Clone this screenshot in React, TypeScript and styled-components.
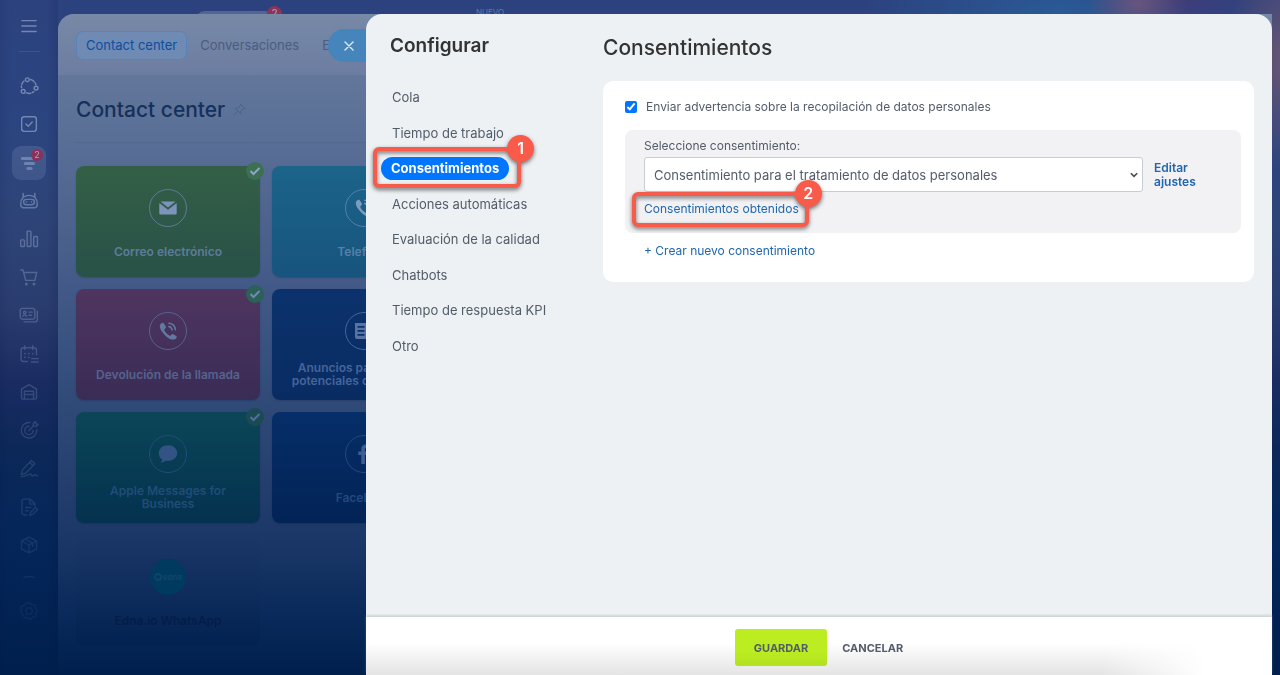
import React from "react";
import styled, { createGlobalStyle, css } from "styled-components";

const GlobalStyle = createGlobalStyle`
  *, *::before, *::after { box-sizing: border-box; }
  body {
    margin: 0;
    background: #001f4d;
    font-family: Inter, "Liberation Sans", sans-serif;
    font-size: 13px;
    color: #525c69;
  }
  a { text-decoration: none; color: inherit; }
  button { font: inherit; border: 0; padding: 0; background: none; cursor: pointer; }
  ul { list-style: none; margin: 0; padding: 0; }
  h1, h2, p { margin: 0; }
`;

/* ---------- workspace ---------- */

const Workspace = styled.div`
  display: flex;
  min-height: 100vh;
  background:
    linear-gradient(90deg, rgba(6, 18, 70, 0.1), transparent 10px, transparent 46px, rgba(6, 18, 60, 0.14) 58px, transparent 58px),
    radial-gradient(ellipse 50px 40px at 1138px 4px, rgba(120, 90, 125, 0.75), transparent),
    radial-gradient(ellipse 60px 110px at 1285px 60px, rgba(112, 88, 112, 0.9), transparent),
    radial-gradient(ellipse 90px 40px at 1180px 0, rgba(64, 58, 118, 0.9), transparent),
    radial-gradient(ellipse 200px 60px at 1060px 10px, rgba(42, 96, 155, 0.8), transparent),
    linear-gradient(180deg, #2c427f 0, #2b4580 120px, #2e4478 220px, #2a3c6e 310px, #1a2c62 380px, #0c2859 450px, #04265a 540px, #001f4d 675px);
`;

const Rail = styled.nav`
  flex: 0 0 58px;
  display: flex;
  flex-direction: column;
  align-items: center;
  padding-top: 14px;
`;

const RailFade = styled.div`
  display: flex;
  flex-direction: column;
  align-items: center;
  color: #8c9dc2;
  -webkit-mask-image: linear-gradient(180deg, rgba(0, 0, 0, 0.75) 0, rgba(0, 0, 0, 0.75) 130px, rgba(0, 0, 0, 0.42) 260px, rgba(0, 0, 0, 0.26) 400px, rgba(0, 0, 0, 0.08) 600px);
  mask-image: linear-gradient(180deg, rgba(0, 0, 0, 0.75) 0, rgba(0, 0, 0, 0.75) 130px, rgba(0, 0, 0, 0.42) 260px, rgba(0, 0, 0, 0.26) 400px, rgba(0, 0, 0, 0.08) 600px);
`;

const RailList = styled.ul`
  display: grid;
  grid-auto-rows: 1fr;
  align-items: center;
  height: 497px;
  margin: 15px 0 0;
`;

const RailButton = styled.button<{ $active?: boolean; $short?: boolean }>`
  position: relative;
  display: flex;
  align-items: center;
  justify-content: center;
  width: 34px;
  height: ${(p) => (p.$short ? 24 : 34)}px;
  border-radius: 9px;
  color: inherit;
  background: ${(p) => (p.$active ? "rgba(140, 160, 200, 0.3)" : "transparent")};
`;

const RailFoot = styled.div`
  display: flex;
  flex-direction: column;
  gap: 6px;
`;

const RailDivider = styled.hr`
  width: 22px;
  height: 1px;
  margin: 13px 0 0;
  border: 0;
  background: rgba(150, 165, 205, 0.2);
`;

const RailBadge = styled.span`
  position: absolute;
  top: 3px;
  right: 3px;
  width: 12px;
  height: 12px;
  border-radius: 50%;
  background: #b02a4c;
  color: #d8ccde;
  font-size: 9px;
  line-height: 12px;
  text-align: center;
`;

const Main = styled.div`
  flex: 1;
  display: flex;
  flex-direction: column;
  min-width: 0;
  padding-right: 8px;
`;

const TopStrip = styled.div`
  display: flex;
  align-items: flex-start;
  height: 14px;
  padding-left: 137px;
  overflow: hidden;
`;

const TopTab = styled.div`
  position: relative;
  width: 80px;
  height: 20px;
  margin-top: 11px;
  border-radius: 10px;
  background: #526594;
`;

const TopBadge = styled.span`
  position: absolute;
  top: -5px;
  right: -7px;
  width: 15px;
  height: 15px;
  border-radius: 50%;
  background: #8a3459;
  color: #b5a3bd;
  font-size: 10px;
  line-height: 14px;
  text-align: center;
`;

const TopNew = styled.span`
  margin: 7px 0 0 201px;
  color: #6478a8;
  font-size: 8px;
  line-height: 10px;
`;

const Page = styled.main`
  flex: 1;
  border-radius: 16px 0 0 0;
  overflow: hidden;
  background: linear-gradient(180deg, #62779a 61px, #576c94 146px, #435a88 270px, #304a78 390px, #1c3868 520px, #092a5b 600px, #001f4d 661px);
`;

const PageHeader = styled.header`
  display: flex;
  align-items: center;
  height: 61px;
  padding: 1px 0 0 18px;
  background: linear-gradient(180deg, #7789a6, #6c7da2);
`;

const HeaderLink = styled.a<{ $active?: boolean }>`
  padding: 0 9px;
  margin-right: 3px;
  border: 1px solid transparent;
  border-radius: 7px;
  font-size: 13px;
  line-height: 27px;
  white-space: nowrap;
  color: #4a5d82;
  ${(p) =>
    p.$active &&
    css`
      color: #0d4da3;
      border-color: #5684bb;
      background: #6f8ab3;
    `}
`;

const PageTitleRow = styled.div`
  display: flex;
  align-items: center;
  gap: 8px;
  height: 68px;
  margin: 0 18px;
  padding-top: 2px;
  border-bottom: 1px solid rgba(70, 90, 130, 0.3);
  color: #4c628b;
`;

const PageTitle = styled.h1`
  color: #15305a;
  font-size: 21px;
  font-weight: 500;
  line-height: 28px;
`;

const TileGrid = styled.div`
  display: grid;
  grid-template-columns: repeat(2, 184px);
  grid-auto-rows: 111px;
  gap: 12px;
  padding: 23px 18px 28px;
`;

const Tile = styled.a<{ $from: string; $to: string; $ink: string; $flat?: boolean }>`
  position: relative;
  display: flex;
  flex-direction: column;
  align-items: center;
  padding: 23px 12px 0;
  border-radius: 8px;
  background: linear-gradient(180deg, ${(p) => p.$from}, ${(p) => p.$to});
  box-shadow: ${(p) => (p.$flat ? "none" : "0 1px 2px rgba(0, 20, 60, 0.2)")};
  color: ${(p) => p.$ink};
`;

const TileDisc = styled.span<{ $fill?: string }>`
  flex: none;
  display: flex;
  align-items: center;
  justify-content: center;
  width: 38px;
  height: 38px;
  border: 1px solid ${(p) => (p.$fill ? "transparent" : "currentColor")};
  border-radius: 50%;
  background: ${(p) => p.$fill || "none"};
  background-clip: padding-box;
`;

const EdnaMark = styled.span`
  display: flex;
  align-items: center;
  gap: 1px;
  color: #0f4569;
  font-size: 8px;
  font-weight: 700;
  line-height: 10px;
`;

const TileLabel = styled.span`
  display: flex;
  align-items: center;
  height: 48px;
  font-size: 12px;
  font-weight: 600;
  line-height: 13px;
  text-align: center;
  white-space: pre-line;
`;

const TileCheck = styled.span<{ $fill: string }>`
  position: absolute;
  top: -4px;
  right: -4px;
  display: flex;
  align-items: center;
  justify-content: center;
  width: 18px;
  height: 18px;
  border-radius: 50%;
  background: ${(p) => p.$fill};
`;

/* ---------- drawer ---------- */

const Drawer = styled.section`
  position: fixed;
  inset: 14px 8px 0 366px;
  display: flex;
  flex-direction: column;
  border-radius: 16px 16px 0 0;
  background: #edf1f4;
`;

const CloseButton = styled.button`
  position: absolute;
  top: 15px;
  left: -38px;
  z-index: -1;
  display: flex;
  align-items: center;
  width: 38px;
  height: 33px;
  padding-left: 15px;
  border-radius: 16px 0 0 16px;
  background: #4585bc;
  color: #dfeaf5;
`;

const DrawerBody = styled.div`
  flex: 1;
  display: flex;
  min-height: 0;
`;

const SideMenu = styled.nav`
  flex: 0 0 237px;
  padding: 18px 0 0 15px;
`;

const SideTitle = styled.h2`
  padding-left: 9px;
  color: #333;
  font-size: 19px;
  font-weight: 600;
  line-height: 28px;
`;

const SideList = styled.ul`
  display: grid;
  grid-auto-rows: 1fr;
  align-items: center;
  justify-items: start;
  height: 284px;
  margin-top: 20px;
`;

const SideItem = styled.li`
  position: relative;
`;

const SideLink = styled.a<{ $active?: boolean }>`
  display: block;
  padding: 0 11px;
  border-radius: 12px;
  font-size: 13px;
  line-height: 23px;
  color: #525c69;
  ${(p) =>
    p.$active &&
    css`
      padding: 0 10px;
      background: #0075ff;
      color: #fff;
      font-weight: 700;
    `}
`;

const Callout = styled.span<{ $inset: string }>`
  position: absolute;
  inset: ${(p) => p.$inset};
  border: 4px solid #f95b4b;
  border-radius: 6px;
  filter: drop-shadow(0 2px 2px rgba(0, 0, 0, 0.55));
  pointer-events: none;
`;

const CalloutNumber = styled.span`
  position: absolute;
  top: -16px;
  right: -17px;
  width: 27px;
  height: 27px;
  border-radius: 50%;
  background: #f95b4b;
  color: #fff;
  font-size: 16px;
  font-weight: 600;
  line-height: 27px;
  text-align: center;
`;

const Content = styled.div`
  flex: 1;
  min-width: 0;
  padding: 20px 18px 0 0;
`;

const ContentTitle = styled.h1`
  color: #333;
  font-size: 21px;
  font-weight: 500;
  line-height: 28px;
`;

const Card = styled.div`
  margin-top: 19px;
  padding: 17px 13px 23px 22px;
  border-radius: 10px;
  background: #fff;
`;

const CheckRow = styled.label`
  display: flex;
  align-items: center;
  gap: 9px;
  font-size: 12px;
  line-height: 18px;
`;

const Checkbox = styled.input`
  width: 12px;
  height: 12px;
  margin: 0;
  accent-color: #0075ff;
`;

const ConsentBox = styled.div`
  margin-top: 14px;
  padding: 8px 18px 16px 19px;
  border-radius: 8px;
  background: #f2f2f4;
`;

const FieldLabel = styled.label`
  display: block;
  font-size: 12px;
  line-height: 16px;
`;

const FieldRow = styled.div`
  display: grid;
  grid-template-columns: minmax(0, 1fr) 69px;
  align-items: center;
  gap: 11px;
  margin-top: 3px;
`;

const SelectWrap = styled.div`
  position: relative;
`;

const Select = styled.select`
  display: block;
  width: 100%;
  height: 35px;
  padding: 0 28px 0 9px;
  appearance: none;
  border: 1px solid #c6cdd3;
  border-radius: 3px;
  background: #fff;
  color: #525c69;
  font: 13px Inter, "Liberation Sans", sans-serif;
`;

const SelectArrow = styled.svg`
  position: absolute;
  top: 13px;
  right: 4px;
  pointer-events: none;
`;

const EditLink = styled.a`
  color: #2067b0;
  font-size: 12px;
  font-weight: 600;
  line-height: 14px;
`;

const TextLink = styled.a`
  position: relative;
  color: #2067b0;
  font-size: 12px;
  line-height: 17px;
`;

const LinkRow = styled.div`
  display: flex;
  margin-top: 8px;
`;

const CreateRow = styled.div`
  display: flex;
  margin: 9px 0 0 19px;
`;

const Footer = styled.footer`
  position: relative;
  display: flex;
  align-items: center;
  justify-content: center;
  gap: 15px;
  height: 58px;
  padding-top: 3px;
  background: linear-gradient(180deg, #fff 45%, #e4e4e4);
  box-shadow: 0 -2px 2px rgba(160, 170, 170, 0.4);

  &::after {
    content: "";
    position: absolute;
    inset: 0 0 0 auto;
    width: 170px;
    background: linear-gradient(90deg, transparent, #fff 60%);
  }
`;

const FooterButton = styled.button<{ $primary?: boolean }>`
  height: 37px;
  padding: 0 ${(p) => (p.$primary ? 19 : 0)}px;
  border-radius: 3px;
  background: ${(p) => (p.$primary ? "linear-gradient(180deg, #bbed21 60%, #b1e11f)" : "none")};
  color: #525c69;
  font-size: 11px;
  font-weight: 700;
`;

/* ---------- icons ---------- */

const LineSvg = styled.svg`
  display: block;
  fill: none;
  stroke: currentColor;
  stroke-width: 1.7;
  stroke-linecap: round;
  stroke-linejoin: round;
`;

const Line = ({ children, size = 20 }: { children: React.ReactNode; size?: number }) => (
  <LineSvg width={size} height={size} viewBox="0 0 24 24" aria-hidden="true">
    {children}
  </LineSvg>
);

const railIcons: { name: string; active?: boolean; icon: React.ReactNode }[] = [
  {
    name: "Colaboración",
    icon: (
      <>
        <circle cx="10" cy="4.500" r="2.300" />
        <circle cx="5" cy="18.500" r="2.300" />
        <circle cx="20.500" cy="14.500" r="2.300" />
        <path d="M6 6C3.500 8 2.600 11 3 14M9 20.300c3.300 1.200 6.500.6 8.800-1.600M14 4.200c3 .9 5.400 3 6.300 6.300" strokeDasharray="5 2" />
      </>
    ),
  },
  {
    name: "Tareas",
    icon: (
      <>
        <rect x="3.2" y="3.2" width="17.6" height="17.6" rx="3" />
        <path d="m8.3 12 2.8 2.7 4.8-5" />
      </>
    ),
  },
  {
    name: "CRM",
    active: true,
    icon: <path strokeWidth="3.600" d="M4 6.500h16M7.500 12.500h10M10.500 18.500h4" />,
  },
  {
    name: "Marketing",
    icon: (
      <>
        <path d="M5 3v4M19 3v4M5 7.500c4-3 10-3 14 0 1.800 2 3 5 3 8.500 0 2-1 4-3 4H5c-2 0-3-2-3-4C2 12.500 3.200 9.500 5 7.500Z" />
        <rect x="5.500" y="10" width="13" height="6.500" rx="3.200" />
        <path d="M9 13.200h.1M15 13.200h.1" />
      </>
    ),
  },
  {
    name: "Analítica",
    icon: (
      <>
        <rect x="2" y="13" width="4.500" height="8" rx="1" />
        <rect x="9.800" y="2.500" width="4.500" height="18.500" rx="1" />
        <rect x="17.600" y="9" width="4.500" height="12" rx="1" />
      </>
    ),
  },
  {
    name: "Tienda",
    icon: (
      <>
        <path d="M2 3.500h2.800L8 16h11l2.300-9.500H5.600" />
        <circle cx="8.800" cy="20.300" r="1" />
        <circle cx="18" cy="20.300" r="1" />
      </>
    ),
  },
  {
    name: "Contactos",
    icon: (
      <>
        <rect x="1.500" y="4" width="17.500" height="13" rx="2.500" />
        <path d="M22 7.500V17c0 2-1 3.200-3 3.200H6" />
        <circle cx="6.800" cy="9" r="1.500" />
        <path d="M4.500 13.500c.8-2 3.800-2 4.600 0M12 8.500h4M12 12.300h3" />
      </>
    ),
  },
  {
    name: "Reservas",
    icon: (
      <>
        <path d="M10 21H5.500C3.500 21 2.500 20 2.500 18V7.500C2.500 5.500 3.500 4.500 5.500 4.500h12.500c2 0 3 1 3 3V13M7 2v4.500M16.500 2v4.500M15 17.500h8M15 21.500h8" />
        <path d="M7 11.500h.1M11.800 11.500h.1M16.500 11.500h.1M7 16h.1M11.800 16h.1" strokeWidth="2.200" />
      </>
    ),
  },
  {
    name: "Almacén",
    icon: (
      <>
        <path d="M3 18.500V8.500L12 3.200l9 5.300v10c0 1.300-.7 2-2 2H5c-1.300 0-2-.7-2-2Z" />
        <path d="M6.500 20V11h11v9M6.500 15h11" />
      </>
    ),
  },
  {
    name: "Objetivos",
    icon: (
      <>
        <path d="M13 3a9.300 9.300 0 1 0 8.300 9M12 7.500a5 5 0 1 0 5 5M12 12.500l5.500-5.500" />
        <path d="m17 7 .2-3 2.600-2 .7 2.500 2.300.8-2.300 2.400Z" />
      </>
    ),
  },
  {
    name: "Firma",
    icon: (
      <>
        <path d="m4 14.500 11-11.500 4 3.800L8 18.300 2.800 20ZM13 5.500l3.800 3.700" />
        <path d="M3 22.500c6 0 9-3.500 11-3.500 1.500 0 .2 2.500 2 2.500 1.500 0 1.500-1.500 3-1.500 1 0 1 1.300 3 1.300" />
      </>
    ),
  },
  {
    name: "Documentos",
    icon: (
      <>
        <path d="M9 21.500H6c-1.500 0-2.500-1-2.500-2.500V5c0-1.500 1-2.500 2.500-2.500h7.500L19 8v3M13 3v5.500h5.500M8 12.500h6M8 16.500h3" />
        <path d="m13 22 .8-3.500 6-6 2.500 2.500-6 6Z" />
      </>
    ),
  },
  {
    name: "Inventario",
    icon: (
      <path d="m12 2.500 9 4.700v9.600l-9 4.700-9-4.700V7.200ZM3.300 7.300 12 12l8.700-4.700M12 12v9M7.500 5l8.800 4.700v4" />
    ),
  },
];

const Handset = ({ color }: { color: string }) => (
  <svg width="20" height="20" viewBox="0 0 20 20" aria-hidden="true">
    <path
      fill={color}
      d="M2.200 3.600C3.400 2 4.800 1.300 5.700 2.300l2 3c.6 1 .1 1.800-1 2.700-.6.500-.5 1.200.2 2.300 1.300 2 2.800 3.400 4.500 4.200.9.400 1.400.1 1.900-.6.700-.9 1.500-1 2.300-.5l2.600 1.700c1 .8.500 2.300-1.200 3.100-2.700 1.300-6.700-.5-10.300-4.300C2.700 9.900 1 6 2.200 3.600Z"
    />
    <path fill="none" stroke={color} strokeWidth="1.500" strokeLinecap="round" d="M10.800 5.500c1.900.3 3 1.500 3.300 3.400M11 2.300c3.600.3 6 2.800 6.300 6.400" />
  </svg>
);

const tiles: {
  label: string;
  from: string;
  to: string;
  ink: string;
  check?: string;
  mark?: string;
  fill?: string;
  icon: React.ReactNode;
}[] = [
  {
    label: "Correo electrónico",
    from: "#345f46",
    to: "#285148",
    ink: "#5c7c98",
    mark: "#8fa3c4",
    check: "#3c6f54",
    icon: (
      <svg width="18" height="14" viewBox="0 0 18 14" aria-hidden="true">
        <path fill="#7e93b9" d="M1.500.5h15L9 6.500ZM.3 2v10.500c0 .6.400 1 1 1h15.400c.6 0 1-.4 1-1V2L9 8.800Z" />
      </svg>
    ),
  },
  {
    label: "Telefonía",
    from: "#1c6489",
    to: "#17547e",
    ink: "#5580a8",
    icon: <Handset color="#7e9abd" />,
  },
  {
    label: "Devolución de la llamada",
    from: "#4f3560",
    to: "#392c55",
    ink: "#56638f",
    mark: "#7289b0",
    check: "#2c6158",
    icon: <Handset color="#61799f" />,
  },
  {
    label: "Anuncios para clientes\npotenciales de Facebook",
    from: "#0c326d",
    to: "#082c62",
    ink: "#46649a",
    icon: (
      <svg width="20" height="18" viewBox="0 0 20 18" aria-hidden="true">
        <path fill="#5a73a2" fillRule="evenodd" d="M1 1h12v3h6v10.500c0 1.500-1 2.500-2.500 2.500H3c-1.300 0-2-.7-2-2Zm2.500 3v1.700h7V4Zm0 4v1.700h7V8Zm0 4v1.700h7V12Z" />
      </svg>
    ),
  },
  {
    label: "Apple Messages for\nBusiness",
    from: "#0b4657",
    to: "#04314f",
    ink: "#1f4d77",
    mark: "#506f9c",
    check: "#1c4a54",
    icon: (
      <svg width="20" height="20" viewBox="0 0 20 20" aria-hidden="true">
        <path fill="#345385" d="M10 1.200c5.200 0 9.200 3.400 9.200 7.800s-4 7.800-9.200 7.800c-.8 0-1.600 0-2.300-.2-1.500 1.300-3.300 2.200-5.300 2.400 1-1 1.700-2.200 1.800-3.600C2 14 .8 11.700.8 9c0-4.400 4-7.800 9.200-7.800Z" />
      </svg>
    ),
  },
  {
    label: "Facebook",
    from: "#062e68",
    to: "#022356",
    ink: "#24487f",
    icon: (
      <svg width="12" height="20" viewBox="0 0 12 20" aria-hidden="true">
        <path fill="#3c5c92" d="M3.300 20v-9H.3V7.500h3V5C3.300 2 5 .4 7.800.4c1.300 0 2.400.1 2.900.2v3.200H8.800c-1.500 0-1.900.8-1.900 1.900v1.800h3.600l-.5 3.500H6.900v9Z" />
      </svg>
    ),
  },
  {
    label: "Edna.io WhatsApp",
    from: "#1b3767",
    to: "#022252",
    ink: "#041d47",
    fill: "#003a5f",
    icon: (
      <EdnaMark>
        <svg width="8" height="8" viewBox="0 0 8 8" aria-hidden="true">
          <circle cx="4" cy="4" r="3" fill="none" stroke="currentColor" strokeWidth="1.800" />
        </svg>
        edna
      </EdnaMark>
    ),
  },
];

const menu = [
  "Cola",
  "Tiempo de trabajo",
  "Consentimientos",
  "Acciones automáticas",
  "Evaluación de la calidad",
  "Chatbots",
  "Tiempo de respuesta KPI",
  "Otro",
];

export default function App() {
  return (
    <>
      <GlobalStyle />
      <Workspace>
        <Rail aria-label="Principal">
          <RailFade>
            <RailButton $short aria-label="Menú">
              <Line>
                <path d="M3.500 5.500h17M3.500 12h17M3.500 18.500h17" />
              </Line>
            </RailButton>
            <RailDivider />
            <RailList>
              {railIcons.map((item) => (
                <li key={item.name}>
                  <RailButton $active={item.active} aria-label={item.name}>
                    <Line>{item.icon}</Line>
                    {item.active && <RailBadge>2</RailBadge>}
                  </RailButton>
                </li>
              ))}
            </RailList>
            <RailFoot>
              <RailButton $short aria-label="Más">
                <Line>
                  <path d="M6 14c3-2 9-2 12 0" />
                </Line>
              </RailButton>
              <RailButton aria-label="Ajustes">
                <Line>
                  <path d="m12 2 3 2.300 3.800.1.900 3.700L22 11.500l-1.700 3.400-.2 3.800-3.700.8L13.500 22l-3-2-3.900.3-1.400-3.500L2 14.200l1-3.700-.3-3.800 3.500-1.500L8.500 2.200Z" />
                  <circle cx="12" cy="12" r="4" />
                </Line>
              </RailButton>
            </RailFoot>
          </RailFade>
        </Rail>

        <Main>
          <TopStrip>
            <TopTab>
              <TopBadge>2</TopBadge>
            </TopTab>
            <TopNew>NUEVO</TopNew>
          </TopStrip>
          <Page>
            <PageHeader>
              <HeaderLink href="#contact" $active>
                Contact center
              </HeaderLink>
              <HeaderLink href="#chats">Conversaciones</HeaderLink>
              <HeaderLink href="#team">Equipo</HeaderLink>
            </PageHeader>
            <PageTitleRow>
              <PageTitle>Contact center</PageTitle>
              <Line size={13}>
                <path d="m14 2 8 8-3 .5-4.500 4.500-.5 5L4 10l5-.5L13.500 5ZM9 15l-7 7" />
              </Line>
            </PageTitleRow>
            <TileGrid>
              {tiles.map((t) => (
                <Tile key={t.label} href="#tile" $from={t.from} $to={t.to} $ink={t.ink} $flat={!!t.fill}>
                  <TileDisc $fill={t.fill}>{t.icon}</TileDisc>
                  <TileLabel>{t.label}</TileLabel>
                  {t.check && (
                    <TileCheck $fill={t.check}>
                      <svg width="12" height="10" viewBox="0 0 12 10" aria-hidden="true">
                        <path d="m1.500 5 3 3 6-6" fill="none" stroke={t.mark} strokeWidth="2" />
                      </svg>
                    </TileCheck>
                  )}
                </Tile>
              ))}
            </TileGrid>
          </Page>
        </Main>
      </Workspace>

      <Drawer aria-label="Configurar">
        <CloseButton aria-label="Cerrar">
          <svg width="12" height="12" viewBox="0 0 12 12" aria-hidden="true">
            <path d="m2 2 8 8M10 2l-8 8" stroke="currentColor" strokeWidth="1.400" strokeLinecap="round" />
          </svg>
        </CloseButton>
        <DrawerBody>
          <SideMenu aria-label="Configurar">
            <SideTitle>Configurar</SideTitle>
            <SideList>
              {menu.map((label) => {
                const active = label === "Consentimientos";
                return (
                  <SideItem key={label}>
                    <SideLink href="#section" $active={active}>
                      {label}
                    </SideLink>
                    {active && (
                      <Callout $inset="-10px -12px -8px -8px">
                        <CalloutNumber>1</CalloutNumber>
                      </Callout>
                    )}
                  </SideItem>
                );
              })}
            </SideList>
          </SideMenu>

          <Content>
            <ContentTitle>Consentimientos</ContentTitle>
            <Card>
              <CheckRow>
                <Checkbox type="checkbox" defaultChecked />
                Enviar advertencia sobre la recopilación de datos personales
              </CheckRow>
              <ConsentBox>
                <FieldLabel htmlFor="consent">Seleccione consentimiento:</FieldLabel>
                <FieldRow>
                  <SelectWrap>
                    <Select id="consent">
                      <option>Consentimiento para el tratamiento de datos personales</option>
                    </Select>
                    <SelectArrow width="10" height="10" viewBox="0 0 10 10" aria-hidden="true">
                      <path d="m1.800 3.200 3.200 3.200 3.200-3.200" fill="none" stroke="#444d58" strokeWidth="1.600" />
                    </SelectArrow>
                  </SelectWrap>
                  <EditLink href="#edit">Editar ajustes</EditLink>
                </FieldRow>
                <LinkRow>
                  <TextLink href="#obtained">
                    Consentimientos obtenidos
                    <Callout $inset="-8px -10px -10px -12px">
                      <CalloutNumber>2</CalloutNumber>
                    </Callout>
                  </TextLink>
                </LinkRow>
              </ConsentBox>
              <CreateRow>
                <TextLink href="#create">+ Crear nuevo consentimiento</TextLink>
              </CreateRow>
            </Card>
          </Content>
        </DrawerBody>
        <Footer>
          <FooterButton $primary>GUARDAR</FooterButton>
          <FooterButton>CANCELAR</FooterButton>
        </Footer>
      </Drawer>
    </>
  );
}
